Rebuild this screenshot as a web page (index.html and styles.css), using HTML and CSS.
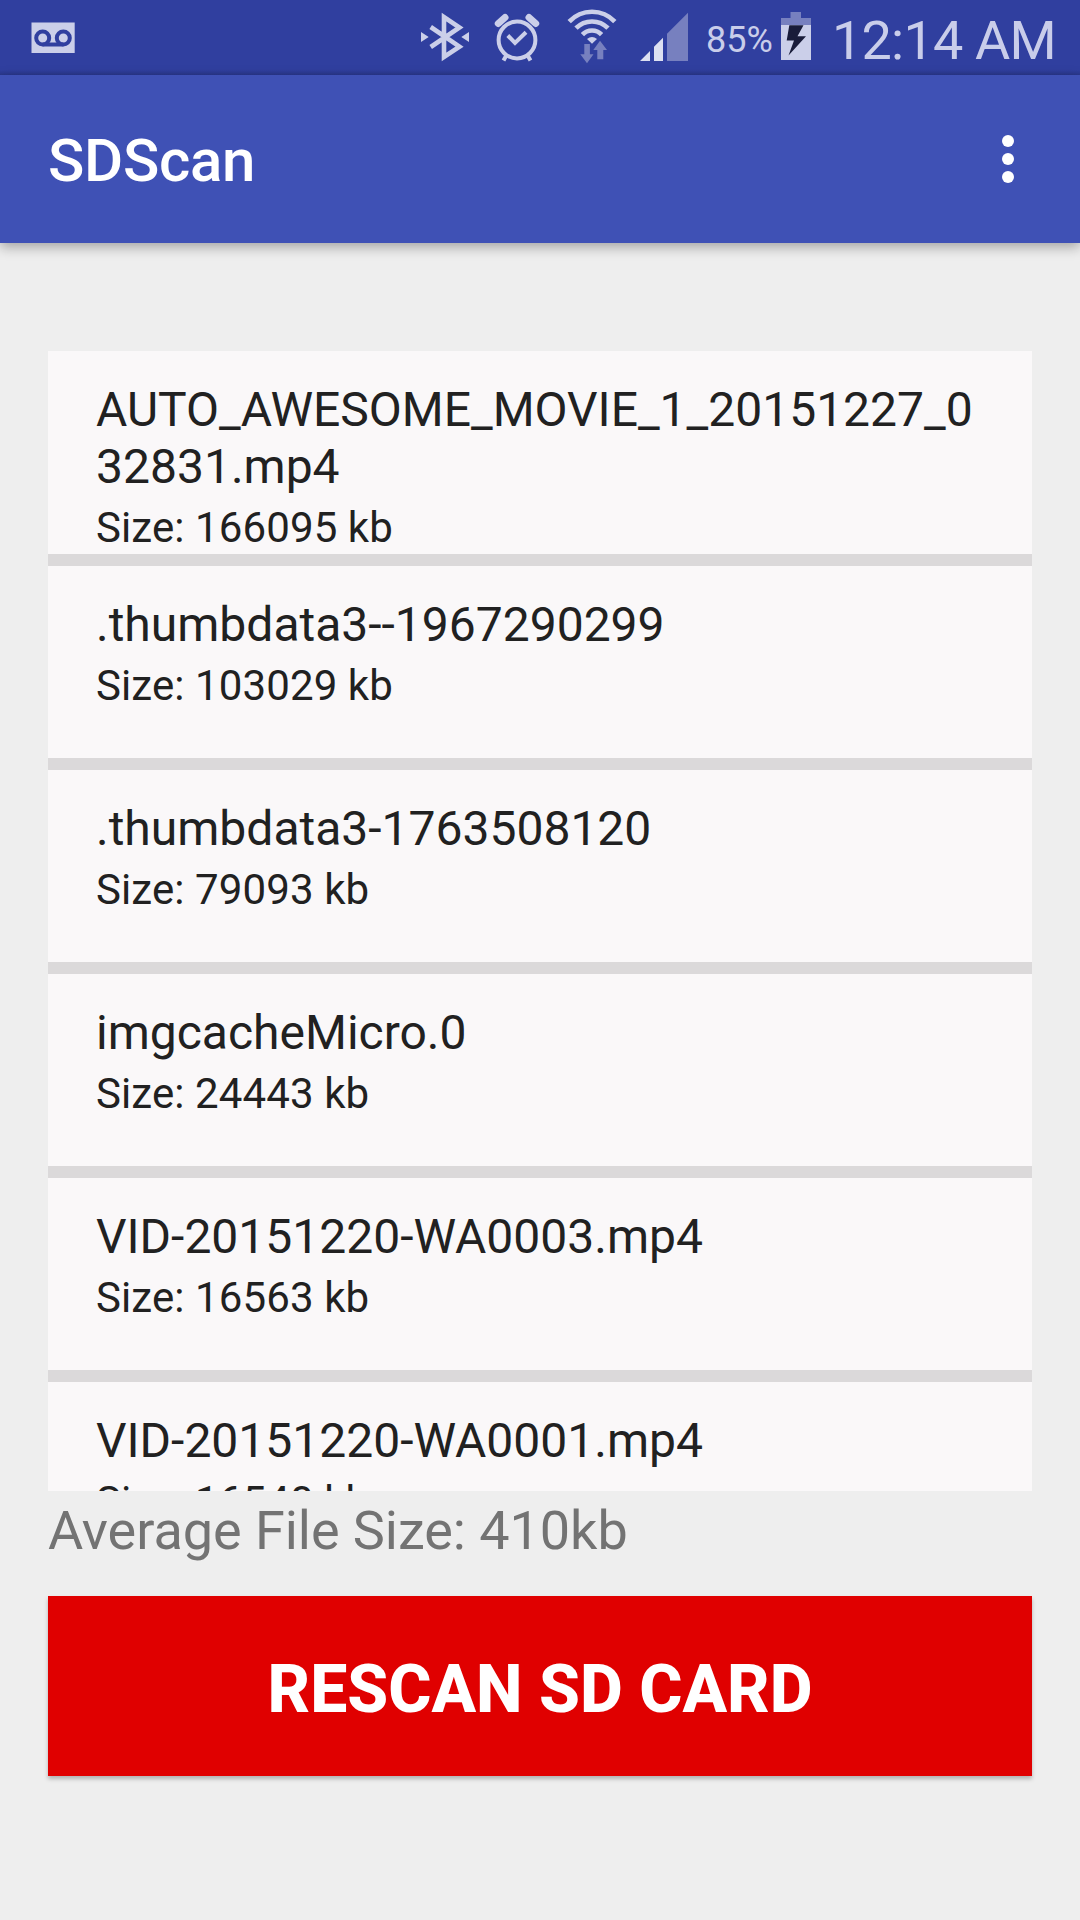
FILE: index.html
```
<!DOCTYPE html>
<html lang="en">
<head>
    <meta charset="UTF-8">
    <meta name="viewport" content="width=device-width, initial-scale=1.0">
    <title>SDScan</title>
    <link rel="stylesheet" href="styles.css">
</head>
<body>

<div class="status-bar">
    <svg class="voicemail" width="44" height="75" viewBox="31 0 44 75">
        <path class="fill" d="M31.5 22.5H74.7V53H31.5z"/>
        <g class="tape">
            <circle cx="42.7" cy="38" r="6.5"/>
            <circle cx="63.3" cy="38" r="6.5"/>
            <path d="M42.7 44.5H63.3"/>
        </g>
    </svg>
    <svg class="bluetooth" width="50" height="75" viewBox="420 0 50 75">
        <path class="line" d="M430.7 27L459.5 46.7L444 57V17L459.5 27.5L430.7 47"/>
        <path class="fill" d="M421 32v10l7.7-5zM469 32v10l-7.7-5z"/>
    </svg>
    <svg class="alarm" width="46" height="75" viewBox="494 0 46 75">
        <circle class="line" cx="517" cy="40" r="18.4"/>
        <path class="line" d="M507.8 35.5L515 43L526 32.2M506.3 55.5L503.5 60.5M527.7 55.5L530.5 60.5"/>
        <path class="bells" d="M498.3 23.5L505 17.5M535.7 23.5L529 17.5"/>
    </svg>
    <svg class="wifi" width="50" height="75" viewBox="567 0 50 75">
        <path class="waves" d="M569.2 21.6A31.2 31.2 0 0 1 614.8 21.6M576 28.2A22.3 22.3 0 0 1 608 28.2M582.4 34.6A13.3 13.3 0 0 1 601.6 34.6"/>
        <path class="fill" d="M592 43.7L587 39Q592 34.8 597 39z"/>
        <path class="dim" d="M584.3 44h5.6v10.3h3.6L587 63.3L580.3 54.3h4zM600 40.7L607 50h-3.7v9.3h-6V50h-4z"/>
    </svg>
    <svg class="signal" width="48" height="75" viewBox="640 0 48 75">
        <path class="full" d="M640 61h10V51zM654 61h9V37.7l-9 9z"/>
        <path class="dim" d="M667 61h21V12.7l-21 21z"/>
    </svg>
    <span class="percent">85%</span>
    <svg class="battery" width="30" height="75" viewBox="781 0 30 75">
        <path class="dim" d="M790.5 12H801v6h10v7h-30v-7h9.5z"/>
        <path class="fill" d="M781 25h30v35h-30z"/>
        <path class="bolt" d="M789.3 25.3h14.2L797.5 36.3h8.5L788.5 55.5L794 40.5h-7.3z"/>
    </svg>
    <span class="clock">12:14 AM</span>
</div>

<header>
    <div class="logo">SDScan</div>
    <button class="menu-button" aria-label="More options">
        <svg width="12" height="48" viewBox="0 0 12 48">
            <circle cx="6" cy="6" r="6"/>
            <circle cx="6" cy="24" r="6"/>
            <circle cx="6" cy="42" r="6"/>
        </svg>
    </button>
</header>

<div class="container">
    <div class="file-list">
        <div class="file tall">
            <div class="name">AUTO_AWESOME_MOVIE_1_20151227_032831.mp4</div>
            <div class="size">Size: 166095 kb</div>
        </div>
        <div class="file">
            <div class="name">.thumbdata3--1967290299</div>
            <div class="size">Size: 103029 kb</div>
        </div>
        <div class="file">
            <div class="name">.thumbdata3-1763508120</div>
            <div class="size">Size: 79093 kb</div>
        </div>
        <div class="file">
            <div class="name">imgcacheMicro.0</div>
            <div class="size">Size: 24443 kb</div>
        </div>
        <div class="file">
            <div class="name">VID-20151220-WA0003.mp4</div>
            <div class="size">Size: 16563 kb</div>
        </div>
        <div class="file">
            <div class="name">VID-20151220-WA0001.mp4</div>
            <div class="size">Size: 16540 kb</div>
        </div>
    </div>

    <p class="average">Average File Size: 410kb</p>
    <button class="scan-button">RESCAN SD CARD</button>
</div>

</body>
</html>
```

FILE: styles.css
```
* {
    box-sizing: border-box;
}
body {
    font-family: Roboto, sans-serif;
    margin: 0;
    height: 1920px;
    overflow: hidden;
    background: #eeeeee;
    color: #212121;
}
.status-bar {
    display: flex;
    height: 75px;
    padding-left: 31px;
    background: linear-gradient(to bottom, #303f9f 70px, #2a388d 75px);
    color: #c9cdea;
    white-space: nowrap;
}
.status-bar svg {
    flex: none;
}
.fill {
    fill: #cbcfe9;
}
.full {
    fill: #dde0f1;
}
.dim {
    fill: #7780bf;
}
.line, .waves, .bells, .tape {
    fill: none;
    stroke: #cbcfe9;
    stroke-width: 4;
}
.waves {
    stroke-width: 4.6;
}
.bells {
    stroke-width: 7;
    stroke-linecap: round;
}
.tape {
    stroke: #303f9f;
}
.bolt {
    fill: #191c3a;
}
.bluetooth {
    margin-left: 345px;
}
.bluetooth .line {
    stroke-width: 4.6;
}
.alarm {
    margin-left: 24px;
}
.wifi {
    margin-left: 27px;
}
.signal {
    margin-left: 23px;
}
.percent {
    width: 75px;
    margin-left: 18px;
    font-size: 36px;
    line-height: 81px;
}
.clock {
    margin-left: 21px;
    font-size: 54px;
    letter-spacing: -0.8px;
    line-height: 82px;
}
header {
    display: flex;
    justify-content: space-between;
    align-items: center;
    position: relative;
    height: 168px;
    padding: 0 66px 0 48px;
    background: #3f51b5;
    color: white;
    box-shadow: 0 4px 12px rgba(0, 0, 0, 0.32);
}
.logo {
    font-size: 60px;
    font-weight: 500;
    letter-spacing: -0.3px;
    padding-top: 2px;
}
.menu-button {
    display: flex;
    padding: 0;
    border: none;
    background: none;
}
.menu-button svg {
    fill: white;
}
.container {
    padding: 108px 48px 0;
}
.file-list {
    height: 1140px;
    overflow: hidden;
    background: #dbd9da;
}
.file {
    height: 192px;
    margin-bottom: 12px;
    padding: 30px 48px 0;
    background: #faf8f9;
}
.file.tall {
    height: 203px;
}
.name {
    font-size: 48px;
    line-height: 57px;
    word-break: break-all;
}
.size {
    margin-top: 8px;
    font-size: 42px;
    line-height: 49px;
    letter-spacing: 0.1px;
}
.average {
    margin: 0;
    height: 105px;
    padding-top: 8px;
    font-size: 54px;
    line-height: 64px;
    letter-spacing: -0.05px;
    color: #737373;
}
.scan-button {
    display: block;
    width: 100%;
    height: 180px;
    padding: 6px 0 0;
    border: none;
    background: #e00000;
    color: white;
    font-family: inherit;
    font-size: 66px;
    font-weight: 800;
    box-shadow: 0 3px 4px rgba(0, 0, 0, 0.25);
}
```
